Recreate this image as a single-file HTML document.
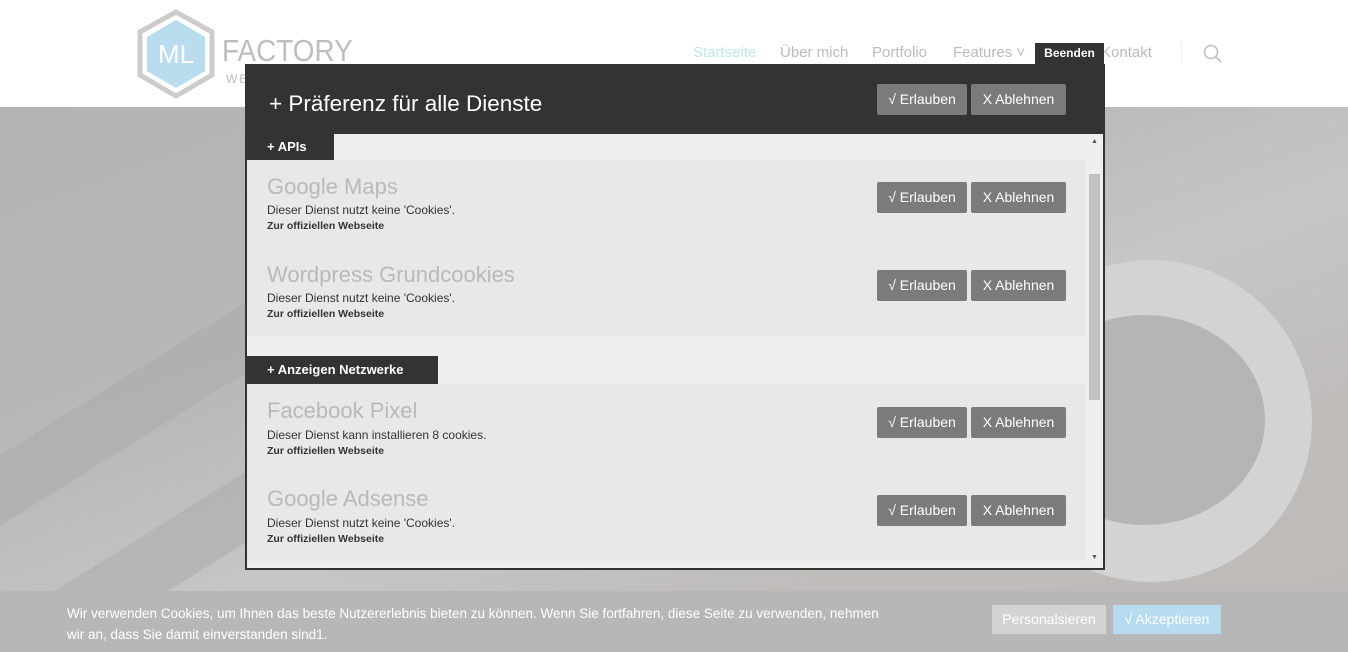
<!DOCTYPE html>
<html><head><meta charset="utf-8"><style>
*{margin:0;padding:0;box-sizing:border-box}
body{width:1348px;height:652px;overflow:hidden;position:relative;font-family:"Liberation Sans",sans-serif;background:#fff}
.hdr{position:absolute;left:0;top:0;width:1348px;height:107px;background:#fff}
.nav{position:absolute;top:44px;font-size:15px;color:#bbb}
.bg{position:absolute;left:0;top:107px;width:1348px;height:545px;background:linear-gradient(160deg,#b3b3b3 0%,#b8b8b8 35%,#c6c6c6 55%,#bfbcba 75%,#bebab8 100%);overflow:hidden}
.keys{position:absolute;left:-60px;top:260px;width:420px;height:60px;background:#a9a9a9;transform:rotate(-32deg);opacity:.5}
.cup{position:absolute;left:990px;top:153px;width:322px;height:322px;border-radius:50%;background:#d3d3d3}
.cupin{position:absolute;left:1025px;top:208px;width:240px;height:210px;border-radius:50%;background:#b5b5b5}
.modal{position:absolute;left:245px;top:64px;width:860px;height:506px;background:#333;border:2px solid #333}
.mh{position:absolute;left:0;top:0;width:856px;height:68px}
.mh .t{position:absolute;left:22px;top:25px;color:#fff;font-size:22.5px}
.btn{position:absolute;height:31px;background:#7b7b7b;color:#fff;font-size:14px;line-height:31px;text-align:center;border-radius:2px}
.content{position:absolute;left:0;top:68px;width:856px;height:434px;background:#efefef;overflow:hidden}
.tab{position:absolute;left:0;background:#333;color:#fff;font-weight:bold;font-size:13px;padding-left:20px;line-height:26px}
.item{position:absolute;left:0;width:839px;background:#e8e8e8}
.nm{position:absolute;left:20px;font-size:22px;color:#b9b9b9}
.ds{position:absolute;left:20px;font-size:12px;color:#333}
.lk{position:absolute;left:20px;font-size:10.5px;font-weight:bold;color:#333}
.sb{position:absolute;left:839px;top:0;width:17px;height:434px;background:#efefef;z-index:5}
.th{position:absolute;left:3px;top:40px;width:11px;height:226px;background:#c1c1c1}
.cb{position:absolute;left:0;top:591px;width:1348px;height:61px;background:#b7b7b7}
.cb .tx{position:absolute;left:67px;top:12px;width:842px;color:#fff;font-size:13.5px;line-height:21px}
</style></head><body>
<div class="hdr">
<svg style="position:absolute;left:137px;top:9px" width="80" height="90" viewBox="0 0 80 90"><polygon points="39,3 75,23 75,66 39,87 3,66 3,23" fill="#fff" stroke="#ccc" stroke-width="5"/><polygon points="39,11 68,28 68,62 39,79 10,62 10,28" fill="#b9dcef"/><text x="39" y="54" font-family="Liberation Sans" font-size="26" fill="#fff" text-anchor="middle">ML</text></svg>
<div style="position:absolute;left:222px;top:33px;font-size:31px;color:#bdbdbd;transform:scaleX(.9);transform-origin:left">FACTORY</div>
<div style="position:absolute;left:226px;top:72px;font-size:12px;color:#bbb;letter-spacing:2px">WE</div>
<div class="nav" style="left:693px;color:#bfe6ea">Startseite</div>
<div class="nav" style="left:780px">Über mich</div>
<div class="nav" style="left:872px">Portfolio</div>
<div class="nav" style="left:953px">Features ˅</div>
<div class="nav" style="left:1101px">Kontakt</div>
<div style="position:absolute;left:1181px;top:42px;width:1px;height:22px;background:#eee"></div>
<svg style="position:absolute;left:1203px;top:44px" width="20" height="20"><circle cx="8" cy="8" r="6.5" fill="none" stroke="#bbb" stroke-width="1.5"/><line x1="13" y1="13" x2="18" y2="18" stroke="#bbb" stroke-width="1.5"/></svg>
<div style="position:absolute;left:1035px;top:43px;width:69px;height:21px;background:#333;color:#fff;font-size:12px;font-weight:bold;line-height:21px;text-align:center">Beenden</div>
</div>
<div class="bg"><div class="keys"></div><div class="keys" style="top:380px;left:-20px;width:500px"></div><div class="cup"></div><div class="cupin"></div></div>
<div class="modal">
<div class="mh"><div class="t">+ Präferenz für alle Dienste</div>
<div class="btn" style="left:630px;top:18px;width:90px">√ Erlauben</div>
<div class="btn" style="left:724px;top:18px;width:95px">X Ablehnen</div></div>
<div class="content">
<div class="tab" style="top:0;width:87px;height:26px">+ APIs</div>
<div class="item" style="top:26px;height:176px">
<div class="nm" style="top:14px">Google Maps</div><div class="ds" style="top:43px">Dieser Dienst nutzt keine 'Cookies'.</div><div class="lk" style="top:60px">Zur offiziellen Webseite</div>
<div class="btn" style="left:630px;top:22px;width:90px">√ Erlauben</div><div class="btn" style="left:724px;top:22px;width:95px">X Ablehnen</div>
<div class="nm" style="top:102px">Wordpress Grundcookies</div><div class="ds" style="top:131px">Dieser Dienst nutzt keine 'Cookies'.</div><div class="lk" style="top:148px">Zur offiziellen Webseite</div>
<div class="btn" style="left:630px;top:110px;width:90px">√ Erlauben</div><div class="btn" style="left:724px;top:110px;width:95px">X Ablehnen</div>
</div>
<div class="tab" style="top:222px;width:191px;height:28px;line-height:28px">+ Anzeigen Netzwerke</div>
<div class="item" style="top:250px;height:177px">
<div class="nm" style="top:14px">Facebook Pixel</div><div class="ds" style="top:44px">Dieser Dienst kann installieren 8 cookies.</div><div class="lk" style="top:61px">Zur offiziellen Webseite</div>
<div class="btn" style="left:630px;top:23px;width:90px">√ Erlauben</div><div class="btn" style="left:724px;top:23px;width:95px">X Ablehnen</div>
<div class="nm" style="top:102px">Google Adsense</div><div class="ds" style="top:132px">Dieser Dienst nutzt keine 'Cookies'.</div><div class="lk" style="top:149px">Zur offiziellen Webseite</div>
<div class="btn" style="left:630px;top:111px;width:90px">√ Erlauben</div><div class="btn" style="left:724px;top:111px;width:95px">X Ablehnen</div>
</div>
<div class="sb"><div style="position:absolute;left:5px;top:4px;font-size:7px;color:#555">▲</div><div class="th"></div><div style="position:absolute;left:5px;top:420px;font-size:7px;color:#555">▼</div></div>
</div></div>
<div class="cb"><div class="tx">Wir verwenden Cookies, um Ihnen das beste Nutzererlebnis bieten zu können. Wenn Sie fortfahren, diese Seite zu verwenden, nehmen<br>wir an, dass Sie damit einverstanden sind1.</div>
<div style="position:absolute;left:992px;top:14px;width:114px;height:29px;background:#d3d3d3;color:#fff;font-size:14px;line-height:29px;text-align:center">Personalsieren</div>
<div style="position:absolute;left:1113px;top:14px;width:108px;height:29px;background:#b7dcef;color:#fff;font-size:14px;line-height:29px;text-align:center">√ Akzeptieren</div></div>
</body></html>
